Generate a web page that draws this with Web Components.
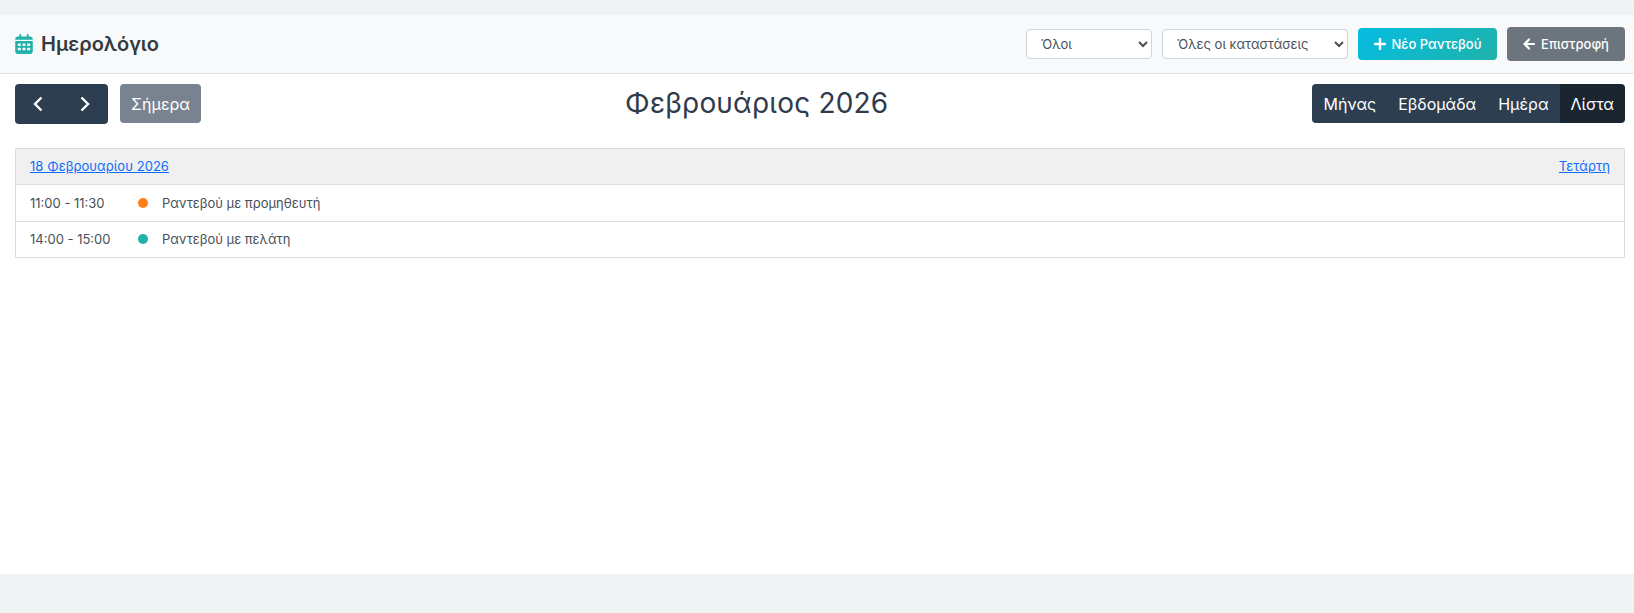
<!DOCTYPE html>
<html lang="el">
<head>
<meta charset="utf-8">
<title>Ημερολόγιο</title>
<style>
  html, body { margin: 0; height: 100%; }
  body {
    background: #f0f3f4;
    font-family: Inter, "Noto Sans", sans-serif;
    color: #343a40;
    padding: 15px 0 39px;
    box-sizing: border-box;
  }
</style>
</head>
<body>
<calendar-page></calendar-page>

<script>
class PageHeader extends HTMLElement {
  connectedCallback() {
    this.attachShadow({ mode: "open" });
    this.shadowRoot.innerHTML = `
      <style>
        :host {
          display: flex;
          align-items: center;
          justify-content: space-between;
          height: 58px;
          box-sizing: content-box;
          padding: 0 9px 0 15px;
          background: #f8f9fa;
          border-bottom: 1px solid #dee2e6;
        }
        h1 {
          display: flex;
          align-items: center;
          gap: 8px;
          margin: 0;
          font-size: 20px;
          font-weight: 600;
          color: #343a40;
        }
        svg { display: block; }
        .actions {
          display: flex;
          align-items: center;
          gap: 10px;
        }
        select {
          height: 30px;
          box-sizing: border-box;
          padding: 0 4px 0 10px;
          font: 13px Inter, sans-serif;
          color: #495057;
          background: #fff;
          border: 1px solid #ced4da;
          border-radius: 4px;
        }
        .who { width: 126px; }
        .status { width: 186px; }
        button {
          display: flex;
          align-items: center;
          justify-content: center;
          gap: 6px;
          box-sizing: border-box;
          border: 0;
          border-radius: 4px;
          color: #fff;
          font: 500 13px Inter, sans-serif;
        }
        .new {
          width: 139px;
          height: 32px;
          background: linear-gradient(135deg, #05bde3, #20b2aa);
        }
        .back {
          width: 118px;
          height: 34px;
          background: #6c757d;
        }
      </style>
      <h1>
        <svg width="18" height="20" viewBox="0 0 448 512" fill="#20b2aa"><path d="M152 24c0-13-11-24-24-24s-24 11-24 24v40H64C29 64 0 93 0 128v16h448v-16c0-35-29-64-64-64h-40V24c0-13-11-24-24-24s-24 11-24 24v40H152V24zM448 176H0v272c0 35 29 64 64 64h320c35 0 64-29 64-64V176zM80 240h48c9 0 16 7 16 16v32c0 9-7 16-16 16H80c-9 0-16-7-16-16v-32c0-9 7-16 16-16zm120 0h48c9 0 16 7 16 16v32c0 9-7 16-16 16h-48c-9 0-16-7-16-16v-32c0-9 7-16 16-16zm120 0h48c9 0 16 7 16 16v32c0 9-7 16-16 16h-48c-9 0-16-7-16-16v-32c0-9 7-16 16-16zM80 352h48c9 0 16 7 16 16v32c0 9-7 16-16 16H80c-9 0-16-7-16-16v-32c0-9 7-16 16-16zm120 0h48c9 0 16 7 16 16v32c0 9-7 16-16 16h-48c-9 0-16-7-16-16v-32c0-9 7-16 16-16zm120 0h48c9 0 16 7 16 16v32c0 9-7 16-16 16h-48c-9 0-16-7-16-16v-32c0-9 7-16 16-16z"/></svg>
        <slot></slot>
      </h1>
      <div class="actions">
        <select class="who"><option>Όλοι</option></select>
        <select class="status"><option>Όλες οι καταστάσεις</option></select>
        <button class="new">
          <svg width="12" height="12" viewBox="0 0 12 12"><path d="M6 1v10M1 6h10" stroke="#fff" stroke-width="2.4" stroke-linecap="round"/></svg>
          Νέο Ραντεβού
        </button>
        <button class="back">
          <svg width="12" height="12" viewBox="0 0 12 12" fill="none"><path d="M6 1.5 1.5 6 6 10.5M2 6h9" stroke="#fff" stroke-width="2.2" stroke-linecap="round" stroke-linejoin="round"/></svg>
          Επιστροφή
        </button>
      </div>
    `;
  }
}

class CalendarToolbar extends HTMLElement {
  connectedCallback() {
    this.attachShadow({ mode: "open" });
    this.shadowRoot.innerHTML = `
      <style>
        :host {
          display: flex;
          justify-content: space-between;
          align-items: flex-start;
          padding: 10px 9px 0 15px;
        }
        .left { display: flex; gap: 12px; }
        .group { display: flex; }
        h2 {
          margin: 0;
          font-size: 28px;
          font-weight: 400;
          line-height: 39px;
          letter-spacing: .2px;
          color: #2f3b4a;
        }
        button {
          height: 39px;
          box-sizing: border-box;
          border: 0;
          padding: 0 11px;
          background: #2c3e50;
          color: #fff;
          font: 400 16px Inter, sans-serif;
        }
        .arrow {
          width: 46.5px;
          height: 40px;
          padding: 0;
          display: flex;
          align-items: center;
          justify-content: center;
        }
        .today { width: 81px; padding: 0; background: #78838f; border-radius: 4px; }
        .group button:first-child { border-radius: 4px 0 0 4px; }
        .group button:last-child { border-radius: 0 4px 4px 0; }
        .active { background: #1a252f; }
      </style>
      <div class="left">
        <div class="group">
          <button class="arrow"><svg width="12" height="18" viewBox="0 0 12 18" fill="none"><path d="M9.5 2.5 3 9l6.5 6.5" stroke="#fff" stroke-width="2.4"/></svg></button>
          <button class="arrow"><svg width="12" height="18" viewBox="0 0 12 18" fill="none"><path d="M2.5 2.5 9 9l-6.5 6.5" stroke="#fff" stroke-width="2.4"/></svg></button>
        </div>
        <button class="today">Σήμερα</button>
      </div>
      <h2><slot></slot></h2>
      <div class="group">
        <button>Μήνας</button>
        <button>Εβδομάδα</button>
        <button>Ημέρα</button>
        <button class="active">Λίστα</button>
      </div>
    `;
  }
}

class ListDay extends HTMLElement {
  connectedCallback() {
    this.attachShadow({ mode: "open" });
    this.shadowRoot.innerHTML = `
      <style>
        :host {
          display: block;
          margin: 24px 9px 0 15px;
          border: 1px solid #ddd;
          border-bottom: 0;
        }
        .head {
          display: flex;
          justify-content: space-between;
          align-items: center;
          height: 33px;
          padding: 0 14px 2px;
          background: #f0f0f0;
          border-bottom: 1px solid #ddd;
          font-size: 13px;
          letter-spacing: .05px;
        }
        a { color: #0d6efd; text-decoration: underline; }
      </style>
      <div class="head">
        <a>${this.getAttribute("date")}</a>
        <a>${this.getAttribute("weekday")}</a>
      </div>
      <slot></slot>
    `;
  }
}

class ListEvent extends HTMLElement {
  connectedCallback() {
    this.attachShadow({ mode: "open" });
    this.shadowRoot.innerHTML = `
      <style>
        :host {
          display: flex;
          align-items: center;
          height: 35.5px;
          padding: 0 14px;
          background: #fff;
          border-bottom: 1px solid #ddd;
          font-size: 13px;
          color: #495057;
        }
        .time { width: 108px; }
        .dot {
          width: 10px;
          height: 10px;
          margin-right: 14px;
          border-radius: 50%;
          background: ${this.getAttribute("color")};
        }
      </style>
      <span class="time">${this.getAttribute("time")}</span>
      <span class="dot"></span>
      <slot></slot>
    `;
  }
}

class CalendarPage extends HTMLElement {
  connectedCallback() {
    this.attachShadow({ mode: "open" });
    this.shadowRoot.innerHTML = `
      <style>
        :host {
          display: block;
          height: 559px;
          background: #fff;
        }
      </style>
      <page-header>Ημερολόγιο</page-header>
      <calendar-toolbar>Φεβρουάριος 2026</calendar-toolbar>
      <list-day date="18 Φεβρουαρίου 2026" weekday="Τετάρτη">
        <list-event time="11:00 - 11:30" color="#fd7e14">Ραντεβού με προμηθευτή</list-event>
        <list-event time="14:00 - 15:00" color="#20b2aa">Ραντεβού με πελάτη</list-event>
      </list-day>
    `;
  }
}

customElements.define("page-header", PageHeader);
customElements.define("calendar-toolbar", CalendarToolbar);
customElements.define("list-day", ListDay);
customElements.define("list-event", ListEvent);
customElements.define("calendar-page", CalendarPage);
</script>
</body>
</html>
